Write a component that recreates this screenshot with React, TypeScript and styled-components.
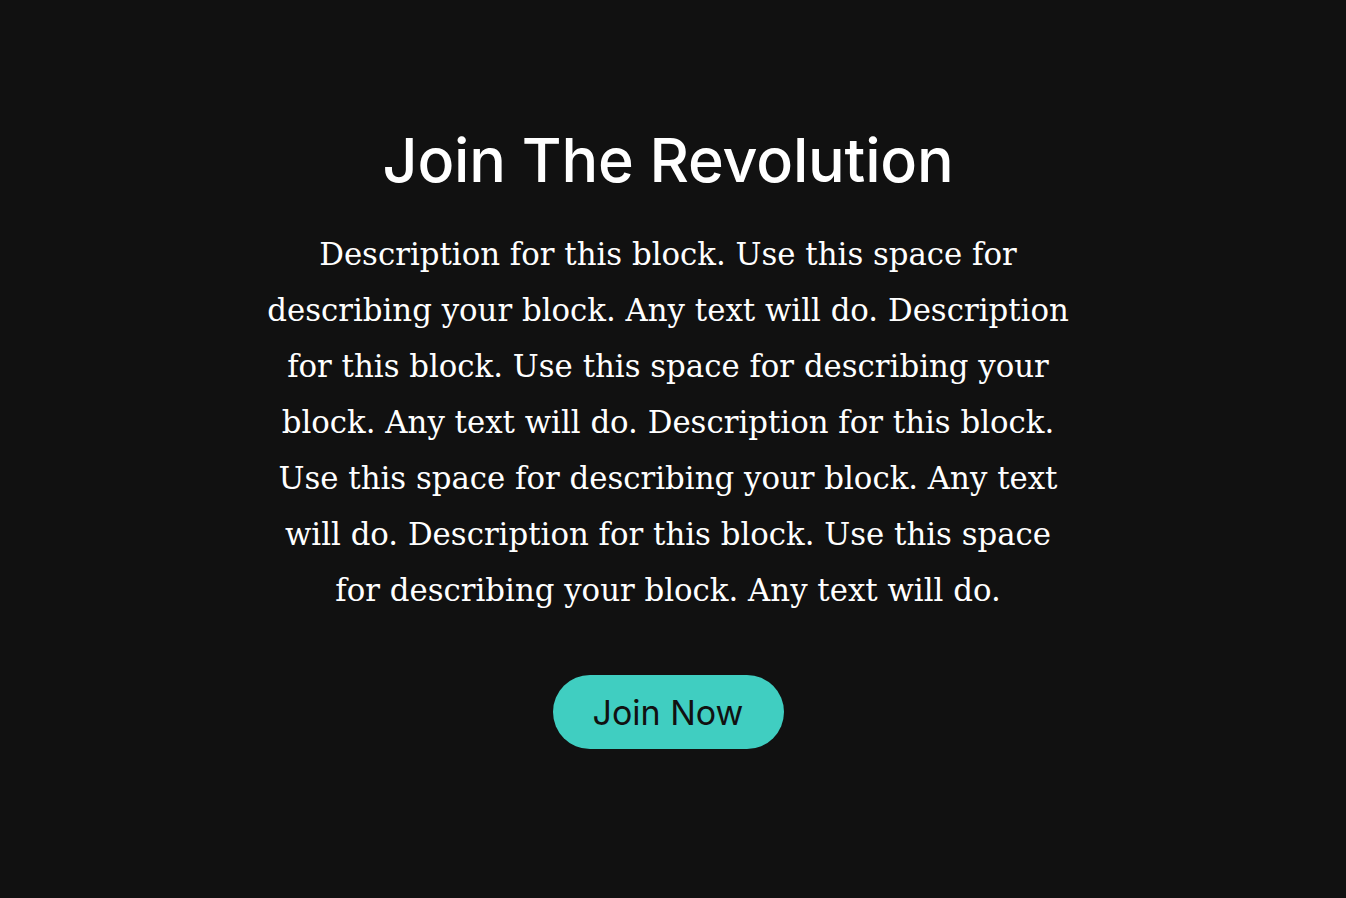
import React from "react";
import styled, { createGlobalStyle } from "styled-components";

const Global = createGlobalStyle`
  html, body { margin: 0; padding: 0; background: #111111; }
  body { min-height: 898px; }
`;

const Section = styled.section`
  display: flex;
  flex-direction: column;
  align-items: center;
  padding: 124px 10px 0 0;
  min-height: 898px;
  box-sizing: border-box;
  background: #111111;
`;

const Title = styled.h1`
  margin: 0;
  font-family: Inter, "Noto Sans", sans-serif;
  font-weight: 500;
  font-size: 61px;
  line-height: 72px;
  letter-spacing: -0.2px;
  color: #ffffff;
  text-align: center;
`;

const Description = styled.p`
  margin: 30px 0 0;
  max-width: 810px;
  font-family: "DejaVu Serif", serif;
  font-weight: 400;
  font-size: 30.8px;
  line-height: 56px;
  color: #ffffff;
  text-align: center;
`;

const Button = styled.button`
  margin-top: 57px;
  width: 231px;
  height: 74px;
  border: none;
  border-radius: 37px;
  background: #40cec1;
  color: #111111;
  font-family: Inter, "Noto Sans", sans-serif;
  font-size: 34px;
  font-weight: 400;
  cursor: pointer;
`;

export default function App() {
  return (
    <>
      <Global />
      <Section>
        <Title>Join The Revolution</Title>
        <Description>
          Description for this block. Use this space for describing your block. Any text will do. Description for this block. Use this space for describing your block. Any text will do. Description for this block. Use this space for describing your block. Any text will do. Description for this block. Use this space for describing your block. Any text will do.
        </Description>
        <Button>Join Now</Button>
      </Section>
    </>
  );
}
